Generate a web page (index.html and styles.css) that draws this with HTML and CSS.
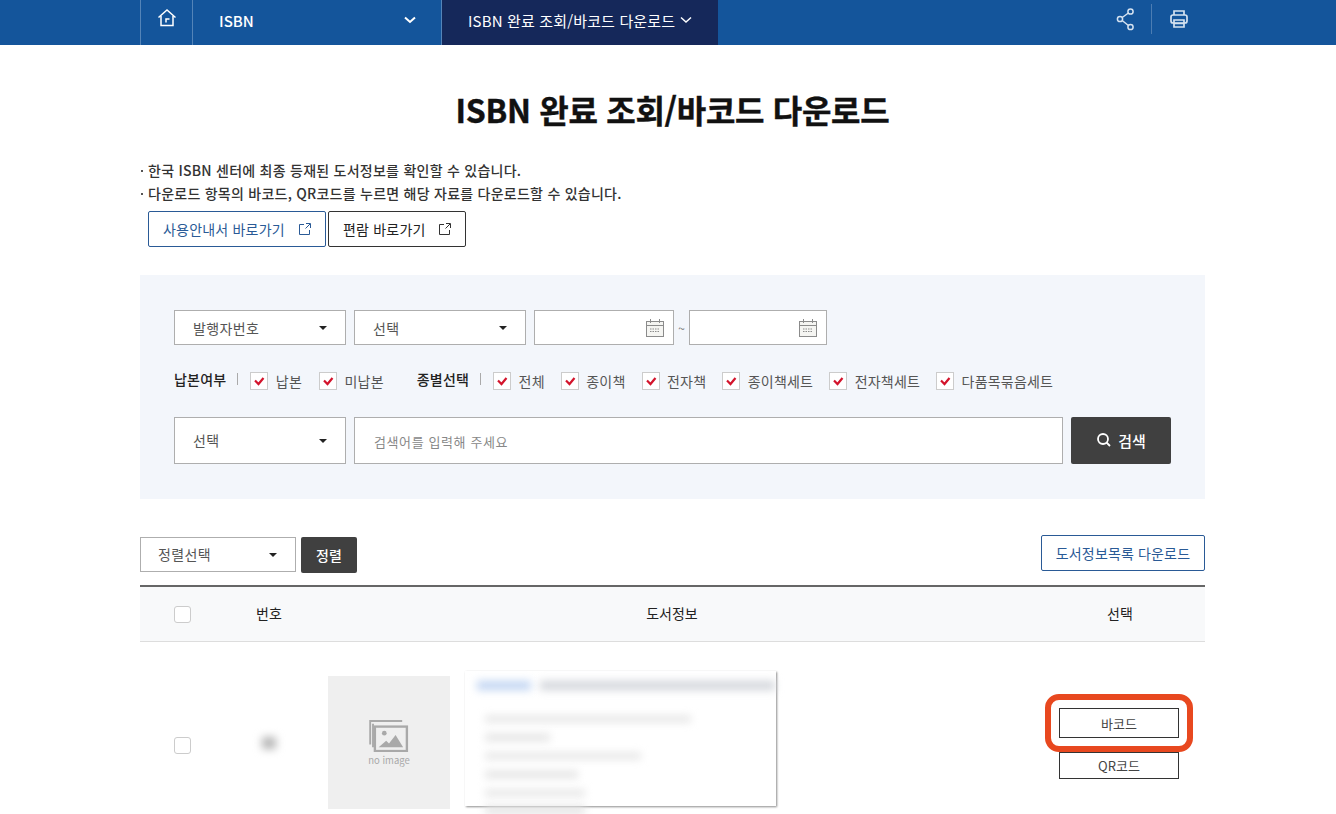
FILE: index.html
```html
<!DOCTYPE html>
<html lang="ko">
<head>
	<meta charset="utf-8"/>
	<title>ISBN 완료 조회/바코드 다운로드</title>
	<link rel="stylesheet" href="styles.css">
</head>

<body>

<nav class="topbar">
	<div class="topbar_inner">
		<a class="crumb_home">
			<svg width="20" height="20" viewBox="0 0 20 20" fill="none" stroke="#fff" stroke-width="1.5"><path d="M1.5 9.500 10 2l8.500 7.500"/><path d="M4 8v9.500h12V8"/><path d="M12.500 11H9v3.500"/></svg>
		</a>
		<a class="crumb_isbn">
			<b>ISBN</b>
			<svg width="12" height="8" viewBox="0 0 12 8" fill="none" stroke="#fff" stroke-width="2"><path d="M1 1.500l5 4.500 5-4.500"/></svg>
		</a>
		<a class="crumb_current">
			<span>ISBN 완료 조회/바코드 다운로드</span>
			<svg width="12" height="8" viewBox="0 0 12 8" fill="none" stroke="#fff" stroke-width="1.5"><path d="M1 1.500l5 4.500 5-4.500"/></svg>
		</a>
		<div class="topbar_tools">
			<svg width="20" height="24" viewBox="0 0 20 24" fill="none" stroke="#d5e2f0" stroke-width="1.5"><circle cx="14.500" cy="4.500" r="2.600"/><circle cx="4" cy="12" r="2.600"/><circle cx="14.500" cy="20" r="2.600"/><path d="M6.200 10.500l6.200-4.500M6.200 13.500l6.200 5"/></svg>
			<span class="tool_sep"></span>
			<svg width="20" height="20" viewBox="0 0 20 20" fill="none" stroke="#d5e2f0" stroke-width="1.7"><path d="M5 6V2h10v4"/><rect x="2" y="6" width="16" height="8" rx="2"/><path d="M5 11h10v7H5zM5 14.500h10"/></svg>
		</div>
	</div>
</nav>

<main class="content">
	<h1 class="page_title">ISBN 완료 조회/바코드 다운로드</h1>

	<ul class="notes">
		<li>한국 ISBN 센터에 최종 등재된 도서정보를 확인할 수 있습니다.</li>
		<li>다운로드 항목의 바코드, QR코드를 누르면 해당 자료를 다운로드할 수 있습니다.</li>
	</ul>

	<div class="link_btns">
		<a class="link_btn link_blue">사용안내서 바로가기
			<svg width="12" height="12" viewBox="0 0 12 12" fill="none" stroke="#2a5a96" stroke-width="1"><path d="M5 1.500H.5v10h10V7M7 .5h4.500V5M11 1 6.500 5.500"/></svg>
		</a>
		<a class="link_btn link_dark">편람 바로가기
			<svg width="12" height="12" viewBox="0 0 12 12" fill="none" stroke="#333" stroke-width="1"><path d="M5 1.500H.5v10h10V7M7 .5h4.500V5M11 1 6.500 5.500"/></svg>
		</a>
	</div>

	<section class="search_box">
		<div class="search_row">
			<div class="select">발행자번호</div>
			<div class="select">선택</div>
			<div class="date_group">
				<div class="date_input">
					<svg class="cal" width="20" height="20" viewBox="0 0 20 20" fill="#f5f5f2" stroke="#8b8b8b" stroke-width="1"><rect x="1.500" y="3.500" width="17" height="15"/><path d="M1.500 7.500h17M5.500 1v4M14.500 1v4"/><path d="M5 11h10M5 13.500h10" stroke-dasharray="1.500 1"/></svg>
				</div>
				<span class="tilde">~</span>
				<div class="date_input">
					<svg class="cal" width="20" height="20" viewBox="0 0 20 20" fill="#f5f5f2" stroke="#8b8b8b" stroke-width="1"><rect x="1.500" y="3.500" width="17" height="15"/><path d="M1.500 7.500h17M5.500 1v4M14.500 1v4"/><path d="M5 11h10M5 13.500h10" stroke-dasharray="1.500 1"/></svg>
				</div>
			</div>
		</div>

		<div class="check_row">
			<b class="check_title">납본여부</b>
			<span class="check_bar"></span>
			<label class="check">납본</label>
			<label class="check">미납본</label>
			<b class="check_title title2">종별선택</b>
			<span class="check_bar"></span>
			<label class="check">전체</label>
			<label class="check">종이책</label>
			<label class="check">전자책</label>
			<label class="check">종이책세트</label>
			<label class="check">전자책세트</label>
			<label class="check">다품목묶음세트</label>
		</div>

		<div class="search_row keyword_row">
			<div class="select">선택</div>
			<div class="keyword">검색어를 입력해 주세요</div>
			<button class="search_btn">
				<svg width="16" height="16" viewBox="0 0 16 16" fill="none" stroke="#fff" stroke-width="1.8"><circle cx="7" cy="7" r="5"/><path d="M10.500 10.500 14 14"/></svg>
				검색
			</button>
		</div>
	</section>

	<div class="list_tools">
		<div class="select sort_select">정렬선택</div>
		<button class="sort_btn">정렬</button>
		<a class="download_btn">도서정보목록 다운로드</a>
	</div>

	<div class="table_head">
		<div class="col_check"><span class="box"></span></div>
		<div class="col_no">번호</div>
		<div class="col_info">도서정보</div>
		<div class="col_pick">선택</div>
	</div>

	<div class="table_row">
		<div class="col_check"><span class="box"></span></div>
		<div class="col_no"><span class="blur_no"></span></div>
		<div class="col_info book">
			<div class="no_image">
				<svg width="40" height="32" viewBox="0 0 42 34" fill="none" stroke="#a9a9a9" stroke-width="2"><path d="M1 26V1h34"/><path d="M4 29V4"/><rect x="6" y="7" width="34" height="26" stroke-width="2.500"/><circle cx="16" cy="14" r="2.500" fill="#a9a9a9" stroke="none"/><path d="M10 29l8-7 3 3 7-9 8 13z" fill="#a9a9a9" stroke="none"/></svg>
				<span>no image</span>
			</div>
			<div class="book_card">
				<div class="blur_title"><i class="blue"></i><i></i></div>
				<i class="blur_line w206"></i>
				<i class="blur_line w65"></i>
				<i class="blur_line w156"></i>
				<i class="blur_line w93"></i>
				<i class="blur_line w100"></i>
				<i class="blur_line blur_under"></i>
			</div>
		</div>
		<div class="col_pick pick_btns">
			<a class="code_btn">바코드<span class="highlight"></span></a>
			<a class="code_btn qr">QR코드</a>
		</div>
	</div>
</main>

</body>
</html>
```

FILE: styles.css
```css
* { box-sizing: border-box; }
html, body {
	margin: 0;
	height: 814px;
	overflow: hidden;
}
body {
	background: #fff;
	color: #222;
	font-family: "Noto Sans CJK KR", "Noto Sans", sans-serif;
	font-size: 14px;
}
button { font-family: inherit; }

/* top bar */
.topbar {
	height: 45px;
	background: #14559b;
}
.topbar_inner {
	display: flex;
	height: 45px;
	margin-left: 140px;
	width: 1065px;
	color: #fff;
	font-size: 15px;
}
.crumb_home {
	width: 53px;
	display: flex;
	justify-content: center;
	padding-top: 8px;
	border-left: 1px solid #5484b8;
	border-right: 1px solid #5484b8;
}
.crumb_isbn {
	width: 249px;
	display: flex;
	justify-content: space-between;
	align-items: center;
	padding: 0 25px 5px 26px;
	border-right: 1px solid #5484b8;
}
.crumb_isbn b { font-weight: 500; }
.crumb_current {
	width: 276px;
	display: flex;
	align-items: center;
	gap: 5px;
	padding: 0 0 5px 26px;
	background: #15285a;
	letter-spacing: 0.15px;
}
.topbar_tools {
	margin-left: auto;
	display: flex;
	align-items: center;
	height: 38px;
	padding-right: 16px;
}
.tool_sep {
	width: 1px;
	height: 30px;
	margin: 0 17px 0 15px;
	background: #4c7db3;
}

/* heading */
.content {
	width: 1065px;
	margin-left: 140px;
}
.page_title {
	margin: 42px 0 0;
	height: 45px;
	line-height: 45px;
	text-align: center;
	font-size: 32px;
	font-weight: 700;
	color: #111;
	letter-spacing: -0.3px;
	-webkit-text-stroke: 0.4px #111;
}
.notes {
	list-style: none;
	margin: 27px 0 0;
	padding: 0;
	font-weight: 500;
	font-size: 14px;
	line-height: 23px;
	letter-spacing: 0.25px;
	color: #333;
}
.notes li {
	padding-left: 8px;
	position: relative;
}
.notes li:before {
	content: "";
	position: absolute;
	left: 1px;
	top: 11px;
	width: 2px;
	height: 2px;
	background: #555;
}
.link_btns {
	display: flex;
	gap: 2px;
	margin: 6px 0 0 8px;
}
.link_btn {
	display: flex;
	align-items: center;
	justify-content: space-between;
	height: 36px;
	padding: 0 14px;
	border: 1px solid #333;
	border-radius: 2px;
	font-size: 14px;
	letter-spacing: 0.2px;
	background: #fff;
}
.link_blue {
	width: 178px;
	border-color: #2a5a96;
	color: #2a5a96;
}
.link_dark { width: 138px; color: #222; }

/* search panel */
.search_box {
	height: 224px;
	margin-top: 28px;
	padding: 35px 34px 0;
	background: #f3f6fb;
}
.search_row {
	display: flex;
	gap: 8px;
	height: 35px;
}
.select {
	position: relative;
	width: 172px;
	display: flex;
	align-items: center;
	padding-left: 18px;
	background: #fff;
	border: 1px solid #aeaeae;
	font-size: 14px;
	letter-spacing: 0.4px;
	color: #555;
}
.select:after {
	content: "";
	position: absolute;
	right: 18px;
	top: 50%;
	margin-top: -2px;
	border-top: 4px solid #222;
	border-left: 4px solid transparent;
	border-right: 4px solid transparent;
}
.date_group {
	display: flex;
	align-items: center;
}
.date_input {
	width: 140px;
	height: 35px;
	display: flex;
	align-items: center;
	justify-content: flex-end;
	padding-right: 8px;
	background: #fff;
	border: 1px solid #aeaeae;
}
.date_input:last-child { width: 138px; }
.tilde {
	width: 15px;
	text-align: center;
	font-size: 12px;
	color: #777;
}
.check_row {
	display: flex;
	align-items: center;
	height: 36px;
	margin-top: 18px;
	font-size: 14px;
	letter-spacing: 0.2px;
	color: #555;
}
.check_title {
	font-weight: 500;
	color: #222;
	letter-spacing: 0.2px;
	margin-top: -4px;
}
.title2 { margin-left: 16px; }
.check_bar {
	width: 1px;
	height: 12px;
	margin: -4px 12px 0 11px;
	background: #aaa;
}
.check {
	display: flex;
	align-items: center;
	gap: 7.5px;
	margin-right: 17px;
}
.title2 ~ .check { margin-right: 16px; }
.check:before {
	content: "";
	width: 16px;
	height: 16px;
	border: 1px solid #ccc;
	background: #fff url("data:image/svg+xml,%3Csvg xmlns='http://www.w3.org/2000/svg' width='14' height='14'%3E%3Cpath d='M3 6.500l3.500 3.500 5-6' fill='none' stroke='%23d3142c' stroke-width='2.200'/%3E%3C/svg%3E") center no-repeat;
}
.keyword_row {
	height: 47px;
	margin-top: 18px;
}
.keyword_row .select { padding-bottom: 2px; }
.keyword {
	flex: 1;
	display: flex;
	align-items: center;
	padding: 2px 0 0 19px;
	background: #fff;
	border: 1px solid #aeaeae;
	font-size: 13px;
	letter-spacing: 0.6px;
	color: #888;
}
.search_btn {
	width: 100px;
	display: flex;
	align-items: center;
	justify-content: center;
	gap: 6px;
	padding-bottom: 2px;
	border: 0;
	border-radius: 2px;
	background: #404040;
	color: #fff;
	font-size: 15px;
	font-weight: 500;
}

/* list */
.list_tools {
	display: flex;
	align-items: flex-start;
	gap: 5px;
	height: 50px;
	margin-top: 36px;
}
.sort_select {
	width: 156px;
	height: 35px;
	margin-top: 2px;
	padding: 0 0 2px 17px;
}
.sort_btn {
	width: 56px;
	height: 36px;
	margin-top: 2px;
	border: 0;
	border-radius: 2px;
	background: #404040;
	color: #fff;
	font-size: 14px;
	font-weight: 500;
}
.download_btn {
	margin-left: auto;
	width: 164px;
	height: 36px;
	display: flex;
	align-items: center;
	justify-content: center;
	border: 1px solid #2a5a96;
	border-radius: 2px;
	color: #2a5a96;
	font-size: 14px;
	letter-spacing: 0.15px;
}
.table_head {
	display: flex;
	align-items: center;
	height: 57px;
	border-top: 2px solid #666;
	border-bottom: 1px solid #ddd;
	background: #f8f9fa;
	text-align: center;
	font-size: 14px;
}
.table_head .col_no, .table_head .col_info, .table_head .col_pick { margin-bottom: 3px; }
.table_head .col_info { padding-right: 8px; }
.col_check { width: 84px; display: flex; padding-left: 34px; }
.col_no { width: 90px; margin-left: 3px; padding-right: 6px; }
.col_info { flex: 1; }
.col_pick { width: 170px; }
.box {
	width: 17px;
	height: 17px;
	border: 1px solid #ccc;
	border-radius: 3px;
	background: #fff;
}

/* result row runs past the bottom of the window */
.table_row {
	display: flex;
	align-items: center;
	height: 206px;
}
.blur_no {
	display: block;
	width: 14px;
	height: 12px;
	margin: -4px auto 0;
	background: #b5b5b5;
	filter: blur(4px);
}
.book {
	display: flex;
	align-items: flex-start;
	gap: 15px;
	align-self: flex-start;
	margin-top: 29px;
	padding-left: 11px;
}
.no_image {
	width: 122px;
	height: 133px;
	margin-top: 5px;
	display: flex;
	flex-direction: column;
	align-items: center;
	justify-content: center;
	gap: 2px;
	background: #efefef;
	color: #a9a9a9;
	font-size: 9.5px;
	line-height: 12px;
}
.book_card {
	position: relative;
	width: 311px;
	height: 135px;
	padding: 10px 12px;
	background: #fff;
	box-shadow: 1px 1px 2px rgba(0,0,0,0.45);
	display: flex;
	flex-direction: column;
	align-items: flex-start;
	gap: 12px;
}
.blur_title {
	display: flex;
	gap: 9px;
	margin-bottom: 14px;
}
.blur_title i {
	display: block;
	width: 235px;
	height: 9px;
	background: #d2d5db;
	filter: blur(4.5px);
}
.blur_title .blue { width: 54px; background: #c0d4f2; }
.blur_line {
	display: block;
	height: 8px;
	margin-left: 8px;
	background: #e2e2e2;
	filter: blur(4px);
}
.w206 { width: 206px; }
.w65 { width: 65px; }
.w156 { width: 156px; }
.w93 { width: 93px; }
.w100 { width: 100px; }
.blur_under {
	position: absolute;
	left: 12px;
	top: 135px;
	width: 100px;
}

.pick_btns {
	display: flex;
	flex-direction: column;
	align-items: center;
	gap: 14px;
	margin-top: -3px;
	padding-right: 2px;
}
.code_btn {
	position: relative;
	width: 120px;
	height: 30px;
	display: flex;
	align-items: center;
	justify-content: center;
	border: 1px solid #333;
	font-size: 13px;
	background: #fff;
	color: #444;
}
.code_btn.qr { height: 27px; }
.highlight {
	position: absolute;
	left: -15px;
	top: -15px;
	width: 148px;
	height: 58px;
	border: 6px solid #e8481f;
	border-radius: 14px;
}
```
